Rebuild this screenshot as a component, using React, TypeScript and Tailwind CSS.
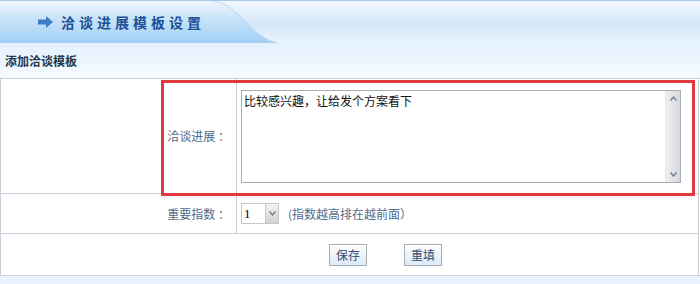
import React from 'react'

const font = { fontFamily: '"Noto Sans CJK SC", "Liberation Sans", sans-serif' }

function HeaderBg() {
  return (
    <svg className="absolute inset-0" width="700" height="42" viewBox="0 0 700 42" preserveAspectRatio="none">
      <defs>
        <linearGradient id="rightBand" x1="0" y1="0" x2="0" y2="1">
          <stop offset="0" stopColor="#f4f9fe" />
          <stop offset="0.55" stopColor="#d3e7f8" />
          <stop offset="1" stopColor="#eaf4fd" />
        </linearGradient>
        <linearGradient id="leftTab" x1="0" y1="0" x2="0" y2="1">
          <stop offset="0" stopColor="#eef6fe" />
          <stop offset="0.45" stopColor="#c6e2f9" />
          <stop offset="1" stopColor="#a3cff4" />
        </linearGradient>
      </defs>
      <rect x="0" y="0" width="700" height="42" fill="url(#rightBand)" />
      <path d="M0 0 H212 C240 2 248 36 278 42 H0 Z" fill="url(#leftTab)" />
      <path d="M212 0 C240 2 248 36 278 42" fill="none" stroke="#bcd7ee" strokeWidth="1" />
    </svg>
  )
}

function Arrow() {
  return (
    <svg width="16" height="12" viewBox="0 0 16 12">
      <path d="M0 3.5 H8 V0 L15 6 L8 12 V8.5 H0 Z" fill="#3d7fc6" />
    </svg>
  )
}

function Chevron({ up }: { up?: boolean }) {
  return (
    <svg width="7" height="5" viewBox="0 0 7 5">
      <path d={up ? 'M0.5 4.5 L3.5 1 L6.5 4.5' : 'M0.5 0.5 L3.5 4 L6.5 0.5'} fill="none" stroke="#6f7b87" strokeWidth="1.3" />
    </svg>
  )
}

function Scrollbar() {
  return (
    <div className="flex flex-col w-[15px] h-full bg-gradient-to-r from-[#eef0f2] via-[#e2e5e8] to-[#d4d8dc] border-l border-[#e6e8ea]">
      <div className="h-[15px] flex items-center justify-center"><Chevron up /></div>
      <div className="flex-1" />
      <div className="h-[15px] flex items-center justify-center"><Chevron /></div>
    </div>
  )
}

export default function App() {
  return (
    <div className="relative w-[700px] h-[284px] overflow-hidden bg-white text-[12px]" style={font}>
      <header className="relative h-[43px] border-t border-[#a6c9e6] border-b border-b-[#bcc9d5]">
        <HeaderBg />
        <div className="relative flex items-center h-full pl-[38px] gap-[7px]">
          <Arrow />
          <h1 className="text-[14px] font-bold tracking-[4px] text-[#1f4f96] leading-none">洽谈进展模板设置</h1>
        </div>
      </header>

      <div className="h-[36px] flex items-center pl-[5px] bg-gradient-to-b from-[#e4f1fd] to-[#f6fbff] border-b border-[#c6d0da]">
        <span className="font-bold text-[#23364d]">添加洽谈模板</span>
      </div>

      <div className="border-l border-r border-[#c8d1da] w-[699px]">
        <div className="flex h-[115px] border-b border-[#c8d1da]">
          <div className="w-[236px] border-r border-[#c8d1da] flex items-center justify-end pr-[6px] text-[#4f6c8d]">
            洽谈进展 ：
          </div>
          <div className="flex-1 pl-[4px] pt-[11px]">
            <div className="w-[440px] h-[93px] border border-[#a9adb2] bg-white flex">
              <div className="flex-1 px-[2px] pt-[2px] text-[#111] leading-[16px]">比较感兴趣，让给发个方案看下</div>
              <Scrollbar />
            </div>
          </div>
        </div>

        <div className="flex h-[40px] border-b border-[#c8d1da]">
          <div className="w-[236px] border-r border-[#c8d1da] flex items-center justify-end pr-[6px] text-[#4f6c8d]">
            重要指数 ：
          </div>
          <div className="flex-1 flex items-center pl-[4px]">
            <div className="flex h-[21px] w-[38px] border border-[#c2c7cc]">
              <div className="flex-1 bg-white flex items-center pl-[2px] text-[13px] text-black" style={{ fontFamily: '"Liberation Serif", serif' }}>1</div>
              <div className="w-[13px] bg-gradient-to-b from-[#f4f4f4] to-[#cfd2d5] border-l border-[#c2c7cc] flex items-center justify-center">
                <Chevron />
              </div>
            </div>
            <span className="ml-[9px] text-[#4f6c8d]">(指数越高排在越前面）</span>
          </div>
        </div>

        <div className="flex items-center h-[41px] pl-[328px] gap-[37px]">
          <button className="w-[38px] h-[22px] border border-[#a8aeb5] bg-gradient-to-b from-white to-[#dce9f6] text-[#2d4a6e] leading-none">保存</button>
          <button className="w-[38px] h-[22px] border border-[#a8aeb5] bg-gradient-to-b from-white to-[#dce9f6] text-[#2d4a6e] leading-none">重填</button>
        </div>
      </div>

      <div className="h-[10px] border-t border-[#c8d1da] bg-[#e9f3fd]" />

      <div className="absolute left-[161px] top-[80px] w-[534px] h-[116px] border-[3px] border-[#e0383c] pointer-events-none" />
    </div>
  )
}
